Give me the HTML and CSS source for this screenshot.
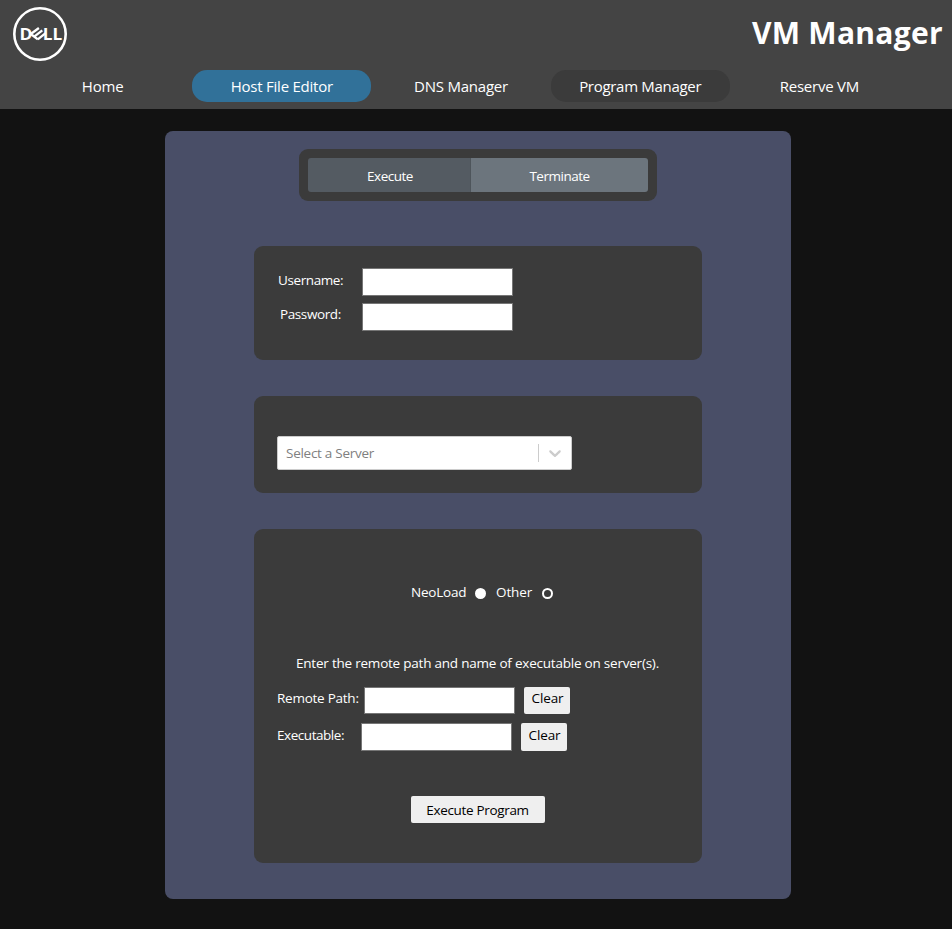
FILE: index.html
```html
<!DOCTYPE html>
<html lang="en">
<head>
<meta charset="utf-8">
<title>VM Manager</title>
<link rel="stylesheet" href="styles.css">
</head>
<body>
<header class="header">
  <div class="brand">
    <svg class="logo" width="54" height="54" viewBox="0 0 54 54" role="img" aria-label="Dell">
      <circle cx="27" cy="27" r="25.7" fill="none" stroke="#fff" stroke-width="2.6"/>
      <g class="logo-text">
        <text x="6.6" y="32.8" textLength="13" lengthAdjust="spacingAndGlyphs">D</text>
        <text x="29.8" y="32.8" textLength="19.4" lengthAdjust="spacingAndGlyphs">LL</text>
      </g>
      <path d="M17.8 27L25.9 21M21.2 29.7L29.3 23.4M24.8 32.4L32.6 26.2M17.8 27L24.8 32.4" fill="none" stroke="#fff" stroke-width="2.3"/>
    </svg>
    <h1 class="title">VM Manager</h1>
  </div>
  <nav class="nav">
    <a class="nav-item">Home</a>
    <a class="nav-item nav-hover">Host File Editor</a>
    <a class="nav-item">DNS Manager</a>
    <a class="nav-item nav-active">Program Manager</a>
    <a class="nav-item">Reserve VM</a>
  </nav>
</header>
<main class="panel">
  <div class="toggle">
    <button class="toggle-btn toggle-on">Execute</button>
    <button class="toggle-btn toggle-off">Terminate</button>
  </div>
  <section class="card login">
    <div class="row"><label class="label user-label" for="user">Username:</label><input class="field" id="user" type="text"></div>
    <div class="row"><label class="label pass-label" for="pass">Password:</label><input class="field" id="pass" type="password"></div>
  </section>
  <section class="card server">
    <div class="select">
      <span class="placeholder">Select a Server</span>
      <span class="separator"></span>
      <svg class="chevron" width="20" height="20" viewBox="0 0 20 20"><path fill="#ccc" d="M4.516 7.548c0.436-0.446 1.043-0.481 1.576 0l3.908 3.747 3.908-3.747c0.533-0.481 1.141-0.446 1.574 0 0.436 0.445 0.408 1.197 0 1.615-0.406 0.418-4.695 4.502-4.695 4.502-0.217 0.223-0.502 0.335-0.787 0.335s-0.57-0.112-0.789-0.335c0 0-4.287-4.084-4.695-4.502s-0.436-1.17 0-1.615z"/></svg>
    </div>
  </section>
  <section class="card program">
    <div class="radios">
      <span class="neoload">NeoLoad</span><span class="radio radio-on"></span>
      <span class="other">Other</span><span class="radio"></span>
    </div>
    <p class="hint">Enter the remote path and name of executable on server(s).</p>
    <div class="row path-row"><label class="label path-label" for="path">Remote Path:</label><input class="field" id="path" type="text"><button class="clear">Clear</button></div>
    <div class="row exe-row"><label class="label exe-label" for="exe">Executable:</label><input class="field" id="exe" type="text"><button class="clear">Clear</button></div>
    <button class="run">Execute Program</button>
  </section>
</main>
</body>
</html>
```
FILE: styles.css
```css
* { box-sizing: border-box; }
body {
  margin: 0;
  min-height: 929px;
  background: #121212;
  color: #fff;
  font: 13.5px/20px "Open Sans", "Noto Sans", sans-serif;
}
button, input { font: inherit; border: 0; padding: 0; margin: 0; }
.header { height: 109px; background: #444; }
.brand { display: flex; justify-content: space-between; height: 70px; padding: 7px 9px 0 13px; }
.logo { flex: none; }
.logo-text { font: bold 16px "Open Sans", sans-serif; fill: #fff; }
.title { margin: 5px 0 0; font-size: 30px; line-height: 42px; font-weight: 700; letter-spacing: 0.3px; }
.nav { display: flex; width: 896px; margin-left: 13px; }
.nav-item { flex: 1; height: 32px; border-radius: 15px; text-align: center; font-size: 15px; line-height: 33px; letter-spacing: -0.23px; }
.nav-hover { background: #317199; }
.nav-active { background: #3b3b3b; letter-spacing: -0.3px; }
.panel {
  display: flex;
  flex-direction: column;
  align-items: center;
  width: 626px;
  height: 768px;
  margin: 22px 0 0 165px;
  padding-top: 18px;
  border-radius: 8px;
  background: #494e67;
}
.toggle { display: flex; width: 358px; height: 52px; padding: 9px; border-radius: 9px; background: #3b3b3b; }
.toggle-btn { height: 34px; color: #fff; line-height: 36px; letter-spacing: -0.5px; }
.toggle-on { width: 163px; background: #545b62; border-right: 1px solid #4e555b; border-radius: 3px 0 0 3px; padding-left: 2px; }
.toggle-off { width: 177px; background: #6c757d; border-radius: 0 3px 3px 0; }
.card { width: 448px; border-radius: 9px; background: #3b3b3b; }
.row { display: flex; }
.label { flex: none; white-space: nowrap; }
.field { flex: none; width: 151px; height: 28px; border: 1px solid #767676; background: #fff; }
.login { display: flex; flex-direction: column; gap: 7px; height: 114px; margin-top: 45px; padding: 22px 24px; }
.login .label { width: 84px; padding-top: 2px; letter-spacing: -0.4px; }
.login .pass-label { padding-left: 2px; padding-top: 1px; }
.server { height: 97px; margin-top: 36px; padding: 40px 23px; }
.select {
  display: flex;
  align-items: center;
  width: 295px;
  height: 34px;
  padding: 0 6px 0 8px;
  border: 1px solid #ccc;
  border-radius: 2px;
  background: #fff;
  color: #808080;
}
.placeholder { flex: 1; letter-spacing: -0.27px; }
.separator { width: 1px; height: 18px; margin-right: 6px; background: #ccc; }
.program { display: flex; flex-direction: column; height: 334px; margin-top: 36px; padding: 53px 23px 0; }
.radios { display: flex; align-items: center; height: 20px; margin-left: 134px; letter-spacing: -0.2px; }
.radio { width: 11px; height: 11px; margin-top: 2px; border: 2px solid #fff; border-radius: 50%; }
.radio-on { background: #fff; }
.neoload { width: 64px; }
.other { width: 46px; margin-left: 10px; letter-spacing: -0.1px; }
.hint { margin: 51px 1px 0 0; text-align: center; white-space: nowrap; letter-spacing: -0.22px; }
.path-row { margin-top: 14px; }
.path-row .field, .path-row .clear { height: 27px; }
.path-label { width: 87px; padding-top: 1px; letter-spacing: -0.25px; }
.exe-label { width: 84px; padding-top: 2px; letter-spacing: -0.45px; }
.exe-row { margin-top: 9px; }
.clear { width: 46px; height: 28px; margin-left: 9px; padding: 0 0 4px 1px; border-radius: 2px; background: #efefef; color: #000; line-height: 20px; letter-spacing: -0.15px; }
.path-row .clear { padding-bottom: 5px; }
.run { width: 134px; height: 27px; margin: 45px auto 0; padding-right: 1px; border-radius: 2px; background: #efefef; color: #000; line-height: 28px; letter-spacing: -0.33px; }
```
